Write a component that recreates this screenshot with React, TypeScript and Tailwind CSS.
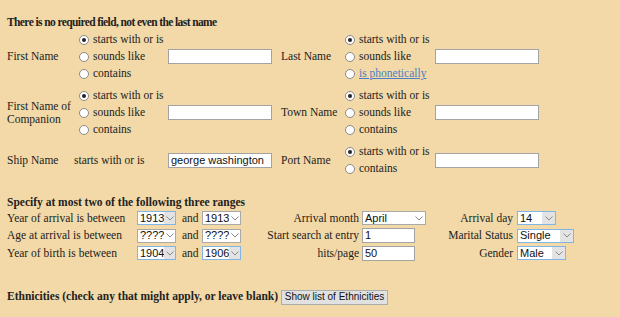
import React from 'react';

const serif = "font-['Liberation_Serif','Times_New_Roman',serif]";
const sans = "font-['Liberation_Sans',Arial,sans-serif]";

function Radio({ checked, label, link }: { checked?: boolean; label: string; link?: boolean }) {
  return (
    <div className="flex h-[17px] items-center">
      <span className="ml-[5px] mr-[4px] flex h-[10px] w-[10px] items-center justify-center rounded-full border border-[#8a8a8a] bg-white">
        {checked && <span className="h-[4px] w-[4px] rounded-full bg-[#222]" />}
      </span>
      {link ? (
        <a href="#" className="text-[#4a7fc4] underline">
          {label}
        </a>
      ) : (
        <span>{label}</span>
      )}
    </div>
  );
}

function TextBox({ value = '', width = 'w-[104px]' }: { value?: string; width?: string }) {
  return (
    <div
      className={`${width} ${sans} flex h-[15px] items-center border border-[#a3a3a3] bg-white pl-[2px] text-[11px] leading-none text-[#111]`}
    >
      {value}
    </div>
  );
}

function Select({ value, width, blue }: { value: string; width: string; blue?: boolean }) {
  return (
    <div
      className={`${width} ${sans} flex h-[14px] items-stretch border ${
        blue ? 'border-[#7fb6e6]' : 'border-[#a9a9a9]'
      } bg-white text-[11px] leading-none text-[#111]`}
    >
      <span className="flex flex-1 items-center pl-[2px]">{value}</span>
      <span className={`flex w-[13px] items-center justify-center ${blue ? 'bg-[#e3e3e3]' : 'bg-white'}`}>
        <svg width="8" height="5" viewBox="0 0 8 5">
          <path d="M0.5 0.5 L4 4 L7.5 0.5" fill="none" stroke="#8a8a8a" strokeWidth="1" />
        </svg>
      </span>
    </div>
  );
}

export default function App() {
  return (
    <div className={`min-h-screen w-full bg-[#f2d9a7] px-[7px] ${serif} text-[11.5px] text-[#222]`}>
      <div className="pt-[15px] font-bold leading-[15px] tracking-[-0.6px]">
        There is no required field, not even the last name
      </div>

      <div className="mt-[1px] grid grid-cols-[67px_94px_104px_9px_59px_95px_104px] items-center gap-y-[5px] leading-[13px]">
        {/* row 1 */}
        <div>First Name</div>
        <div>
          <Radio checked label="starts with or is" />
          <Radio label="sounds like" />
          <Radio label="contains" />
        </div>
        <TextBox />
        <div />
        <div>Last Name</div>
        <div>
          <Radio checked label="starts with or is" />
          <Radio label="sounds like" />
          <Radio link label="is phonetically" />
        </div>
        <TextBox />

        {/* row 2 */}
        <div>
          First Name of
          <br />
          Companion
        </div>
        <div>
          <Radio checked label="starts with or is" />
          <Radio label="sounds like" />
          <Radio label="contains" />
        </div>
        <TextBox />
        <div />
        <div>Town Name</div>
        <div>
          <Radio checked label="starts with or is" />
          <Radio label="sounds like" />
          <Radio label="contains" />
        </div>
        <TextBox />

        {/* row 3 */}
        <div>Ship Name</div>
        <div>starts with or is</div>
        <TextBox value="george washington" />
        <div />
        <div>Port Name</div>
        <div>
          <Radio checked label="starts with or is" />
          <Radio label="contains" />
        </div>
        <TextBox />
      </div>

      <div className="mt-[17.5px] font-bold leading-[15px]">Specify at most two of the following three ranges</div>

      <div className="grid grid-cols-[130px_39px_26px_39px_121px_64px_91px_60px] grid-rows-[17.5px_17.5px_17.5px] items-center leading-[13px]">
        <div>Year of arrival is between</div>
        <Select value="1913" width="w-[39px]" blue />
        <div className="pl-[6px]">and</div>
        <Select value="1913" width="w-[39px]" />
        <div className="pr-[3px] text-right">Arrival month</div>
        <Select value="April" width="w-[64px]" />
        <div className="pr-[4px] text-right">Arrival day</div>
        <Select value="14" width="w-[39px]" blue />

        <div>Age at arrival is between</div>
        <Select value="????" width="w-[39px]" />
        <div className="pl-[6px]">and</div>
        <Select value="????" width="w-[39px]" />
        <div className="pr-[3px] text-right">Start search at entry</div>
        <TextBox value="1" width="w-[53px]" />
        <div className="pr-[4px] text-right">Marital Status</div>
        <Select value="Single" width="w-[57px]" blue />

        <div>Year of birth is between</div>
        <Select value="1904" width="w-[39px]" blue />
        <div className="pl-[6px]">and</div>
        <Select value="1906" width="w-[39px]" blue />
        <div className="pr-[3px] text-right">hits/page</div>
        <TextBox value="50" width="w-[53px]" />
        <div className="pr-[4px] text-right">Gender</div>
        <Select value="Male" width="w-[49px]" blue />
      </div>

      <div className="mt-[27px] flex h-[16px] items-center gap-[3px]">
        <span className="font-bold">Ethnicities (check any that might apply, or leave blank)</span>
        <button
          className={`${sans} h-[15px] w-[107px] border border-[#adadad] bg-[#e1e1e1] px-0 text-[10px] leading-none text-[#111]`}
        >
          Show list of Ethnicities
        </button>
      </div>
    </div>
  );
}
